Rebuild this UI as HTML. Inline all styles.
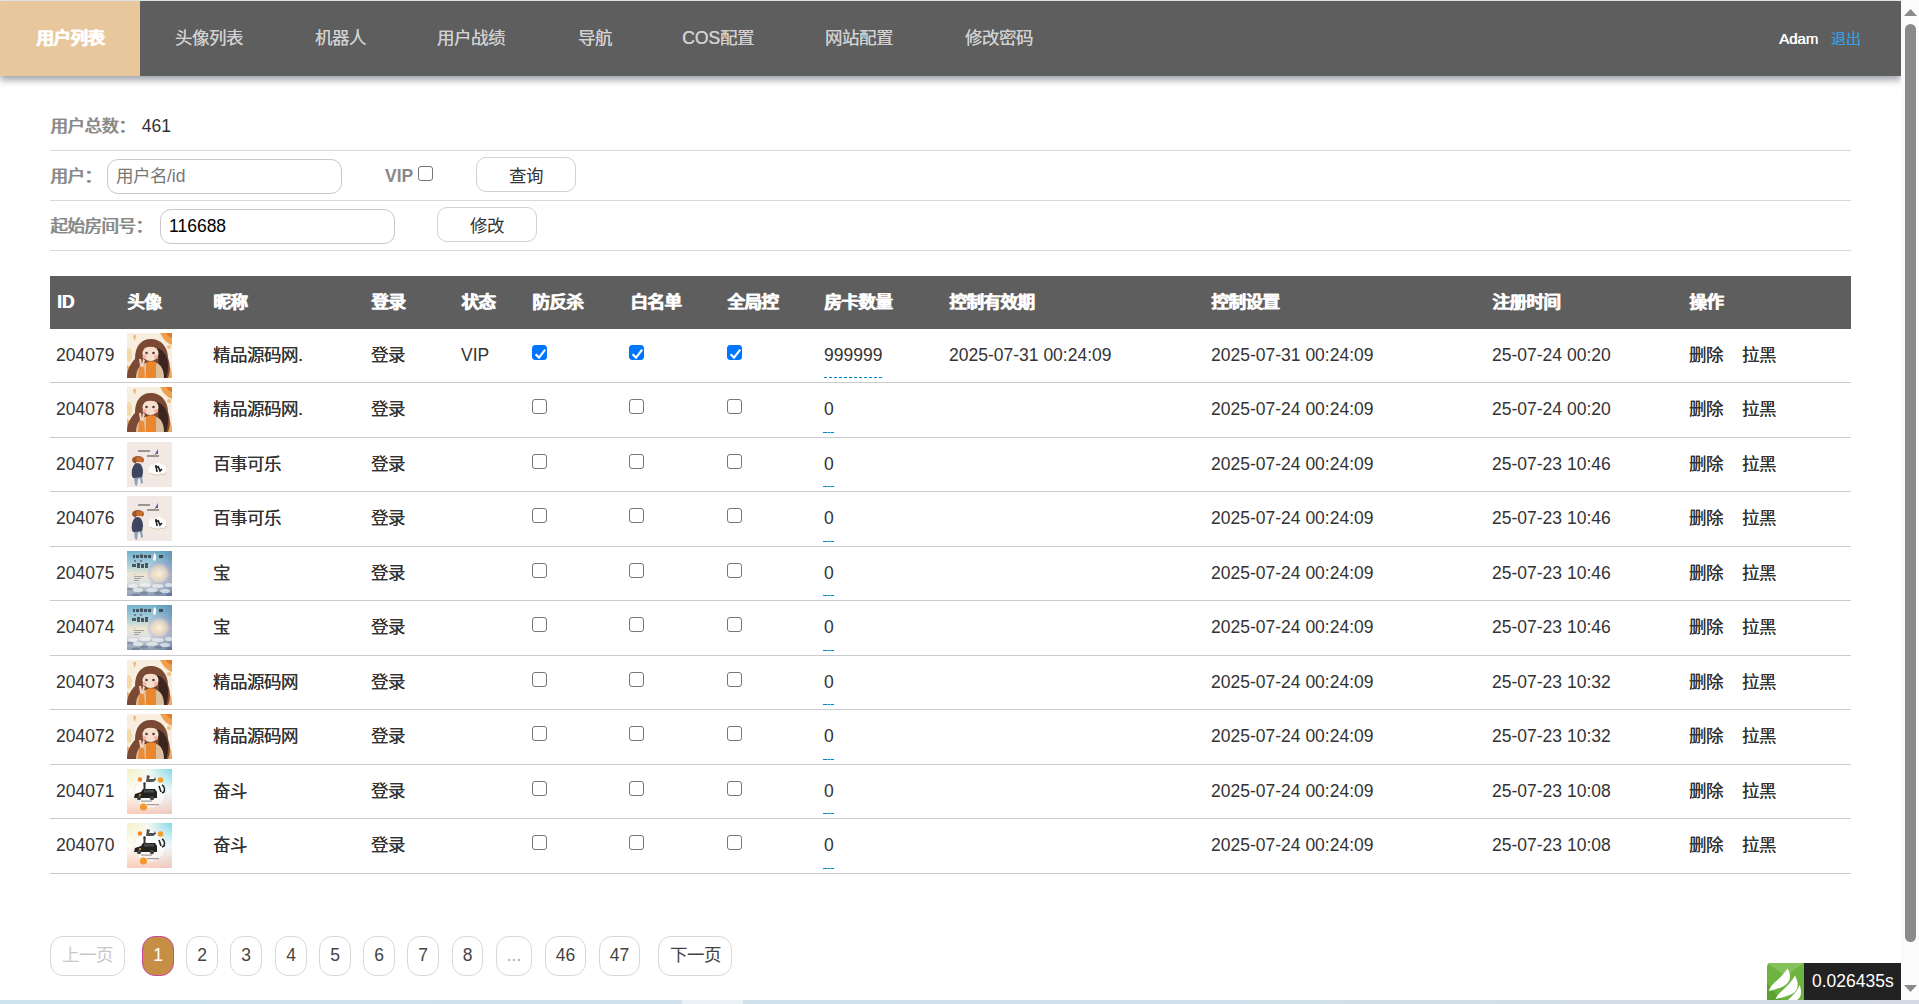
<!DOCTYPE html>
<html lang="zh-CN"><head><meta charset="utf-8"><style>
html,body{margin:0;padding:0;overflow:hidden;background:#fff;}
body{width:1919px;height:1004px;position:relative;font-family:"Liberation Sans",sans-serif;font-size:17.5px;color:#333;}
.a{position:absolute;white-space:nowrap;}
.topline{position:absolute;left:0;top:0;width:1902px;height:1px;background:#e9ecee;}
.nav{position:absolute;left:0;top:1px;width:1901px;height:75px;background:#5e5e5e;box-shadow:0 4px 7px rgba(60,70,85,.5);}
.nav a{position:absolute;top:0;height:75px;line-height:75px;color:#d0d0d0;text-decoration:none;white-space:nowrap;text-shadow:0.4px 0 0 #d0d0d0;}
.nav a.on{left:0;width:140px;background:#e8c79d;color:#fff;font-weight:bold;text-align:center;text-shadow:0.5px 0 0 #fff;}
.user{position:absolute;top:0;height:75px;line-height:75px;color:#fff;font-size:15px;text-shadow:0.4px 0 0 currentColor;}
.logout{color:#3a9bdc;}
.lbl{position:absolute;color:#888;font-weight:normal;white-space:nowrap;line-height:20px;text-shadow:0.5px 0 0 #888;}
.lbl b{font-weight:bold;text-shadow:none;}
.hr{position:absolute;left:50px;width:1801px;height:1px;background:#d9d9d9;}
.inp{position:absolute;box-sizing:border-box;border:1px solid #c8c8c8;border-radius:11px;height:35px;width:235px;line-height:33px;padding-left:8px;white-space:nowrap;}
.btn{position:absolute;box-sizing:border-box;border:1px solid #d0d0d0;border-radius:10px;height:35px;width:100px;line-height:36px;text-align:center;color:#333;}
.cb{position:absolute;box-sizing:border-box;width:15px;height:15px;border:1px solid #767676;border-radius:3px;background:#fff;}
.cb.on{background:#0075ff;border-color:#0075ff;}
.cb svg{position:absolute;left:0;top:0;}
.thead{position:absolute;left:50px;top:276px;width:1801px;height:53px;background:#5e5e5e;}
.th{position:absolute;top:0;line-height:53px;color:#fff;font-weight:bold;white-space:nowrap;text-shadow:0.5px 0 0 #fff;}
.rl{position:absolute;left:50px;width:1801px;height:1px;background:#cbcbcb;}
.td{position:absolute;white-space:nowrap;line-height:20px;}
.cj{text-shadow:0.3px 0 0 #333;}
.av{position:absolute;left:127px;width:45px;height:45px;overflow:hidden;}
.av svg{filter:blur(0.35px);}
.dash{position:absolute;height:1px;}
.pg{position:absolute;top:936px;height:40px;box-sizing:border-box;border:1px solid #d8d8d8;border-radius:13px;line-height:36px;text-align:center;color:#444;}
.sb{position:absolute;left:1901px;top:0;width:18px;height:1004px;background:#fbfbfb;}
</style></head><body>
<div class="topline"></div>
<div class="nav">
<a class="on">用户列表</a>
<a style="left:175px">头像列表</a>
<a style="left:315px">机器人</a>
<a style="left:437px">用户战绩</a>
<a style="left:578px">导航</a>
<a style="left:682px">COS配置</a>
<a style="left:825px">网站配置</a>
<a style="left:965px">修改密码</a>
<span class="user" style="left:1779px">Adam</span>
<span class="user logout" style="left:1831px">退出</span>
</div>

<div class="lbl" style="left:50px;top:116px">用户总数：<span style="color:#333;font-weight:normal;margin-left:2px;text-shadow:none"> 461</span></div>
<div class="hr" style="top:150px"></div>
<div class="lbl" style="left:50px;top:166px">用户：</div>
<div class="inp" style="left:107px;top:159px;color:#777">用户名/id</div>
<div class="lbl" style="left:385px;top:166px"><b>VIP</b></div>
<div class="cb" style="left:418px;top:166px"></div>
<div class="btn" style="left:476px;top:157px">查询</div>
<div class="hr" style="top:200px"></div>
<div class="lbl" style="left:50px;top:216px">起始房间号：</div>
<div class="inp" style="left:160px;top:209px;color:#000">116688</div>
<div class="btn" style="left:437px;top:207px">修改</div>
<div class="hr" style="top:250px"></div>
<div class="thead">
<span class="th" style="left:7px">ID</span>
<span class="th" style="left:77px">头像</span>
<span class="th" style="left:163px">昵称</span>
<span class="th" style="left:321px">登录</span>
<span class="th" style="left:411px">状态</span>
<span class="th" style="left:482px">防反杀</span>
<span class="th" style="left:580px">白名单</span>
<span class="th" style="left:677px">全局控</span>
<span class="th" style="left:774px">房卡数量</span>
<span class="th" style="left:899px">控制有效期</span>
<span class="th" style="left:1161px">控制设置</span>
<span class="th" style="left:1442px">注册时间</span>
<span class="th" style="left:1639px">操作</span>
</div>
<div class="av" style="top:333px"><svg width="45" height="45" viewBox="0 0 45 45">
<rect width="45" height="45" fill="#f7eee0"/>
<path d="M33 0 H45 V12 C42 11 38 8 36 5Z" fill="#eea04f"/>
<path d="M39 0 H45 V5 C42 4 40 2 39 0Z" fill="#e27a2a"/>
<path d="M6 3 L9 1.5 L8 8Z" fill="#efab68"/>
<circle cx="42" cy="14" r="2" fill="#f0c080"/>
<ellipse cx="2" cy="22" rx="3" ry="7" fill="#f3d9a8"/>
<path d="M0 32 C3 33 6 37 7 45 H0Z" fill="#eeb25c"/>
<path d="M39 30 C43 32 45 36 45 45 H38Z" fill="#eda55a"/>
<path d="M0 45 C0 36 4 30 8 26 C8 13 14 6 24 6 C34 6 41 14 41 25 C44 33 43 40 41 45Z" fill="#7a4a34"/>
<path d="M30 15 C37 17 42 25 41 34 C41 39 40 43 39 45 H30 C31 36 33 24 30 15Z" fill="#3c2420"/>
<ellipse cx="23.5" cy="20.5" rx="8" ry="7.5" fill="#f5dfcf"/>
<path d="M15 16 C17 11 22 10 28 11 C31 12 32 14 32 16 C27 13 20 13 15 16Z" fill="#7a4a34"/>
<circle cx="19.5" cy="20" r="1.3" fill="#5a3a38"/><circle cx="26.5" cy="20" r="1.3" fill="#5a3a38"/>
<circle cx="17.5" cy="24" r="2" fill="#f2b3a6"/><circle cx="29" cy="24" r="2" fill="#f2b3a6"/>
<path d="M9 45 C9 38 12 32 18 30 H29 C34 31 37 37 37 45Z" fill="#dcbf9c"/>
<path d="M19 45 V30 C21 28 25 28 29 29 V45Z" fill="#e9862e"/>
<path d="M11 45 L12 35 C13 33 16 33 17 35 L18 45Z" fill="#ea8c38"/>
<path d="M13 33 L12 26 L14 26 L15 31 L16 26 L18 27 L16 34Z" fill="#f3d5c0"/>
</svg></div>
<div class="td" style="left:56px;top:345px">204079</div>
<div class="td cj" style="left:213px;top:345px">精品源码网.</div>
<div class="td cj" style="left:371px;top:345px">登录</div>
<div class="td" style="left:461px;top:345px">VIP</div>
<div class="cb on" style="left:532px;top:345px"><svg width="15" height="15" viewBox="0 0 15 15"><path d="M2.6 8.2 L6 11.6 L12.2 3.6" fill="none" stroke="#fff" stroke-width="2.2"/></svg></div>
<div class="cb on" style="left:629px;top:345px"><svg width="15" height="15" viewBox="0 0 15 15"><path d="M2.6 8.2 L6 11.6 L12.2 3.6" fill="none" stroke="#fff" stroke-width="2.2"/></svg></div>
<div class="cb on" style="left:727px;top:345px"><svg width="15" height="15" viewBox="0 0 15 15"><path d="M2.6 8.2 L6 11.6 L12.2 3.6" fill="none" stroke="#fff" stroke-width="2.2"/></svg></div>
<div class="td" style="left:824px;top:345px">999999</div>
<div class="dash" style="left:824px;top:377px;width:58px;background:repeating-linear-gradient(90deg,#0085c9 0 3px,transparent 3px 5px)"></div>
<div class="td" style="left:949px;top:345px">2025-07-31 00:24:09</div>
<div class="td" style="left:1211px;top:345px">2025-07-31 00:24:09</div>
<div class="td" style="left:1492px;top:345px">25-07-24 00:20</div>
<div class="td cj" style="left:1689px;top:345px">删除</div>
<div class="td cj" style="left:1742px;top:345px">拉黑</div>
<div class="rl" style="top:382px"></div>
<div class="av" style="top:387px"><svg width="45" height="45" viewBox="0 0 45 45">
<rect width="45" height="45" fill="#f7eee0"/>
<path d="M33 0 H45 V12 C42 11 38 8 36 5Z" fill="#eea04f"/>
<path d="M39 0 H45 V5 C42 4 40 2 39 0Z" fill="#e27a2a"/>
<path d="M6 3 L9 1.5 L8 8Z" fill="#efab68"/>
<circle cx="42" cy="14" r="2" fill="#f0c080"/>
<ellipse cx="2" cy="22" rx="3" ry="7" fill="#f3d9a8"/>
<path d="M0 32 C3 33 6 37 7 45 H0Z" fill="#eeb25c"/>
<path d="M39 30 C43 32 45 36 45 45 H38Z" fill="#eda55a"/>
<path d="M0 45 C0 36 4 30 8 26 C8 13 14 6 24 6 C34 6 41 14 41 25 C44 33 43 40 41 45Z" fill="#7a4a34"/>
<path d="M30 15 C37 17 42 25 41 34 C41 39 40 43 39 45 H30 C31 36 33 24 30 15Z" fill="#3c2420"/>
<ellipse cx="23.5" cy="20.5" rx="8" ry="7.5" fill="#f5dfcf"/>
<path d="M15 16 C17 11 22 10 28 11 C31 12 32 14 32 16 C27 13 20 13 15 16Z" fill="#7a4a34"/>
<circle cx="19.5" cy="20" r="1.3" fill="#5a3a38"/><circle cx="26.5" cy="20" r="1.3" fill="#5a3a38"/>
<circle cx="17.5" cy="24" r="2" fill="#f2b3a6"/><circle cx="29" cy="24" r="2" fill="#f2b3a6"/>
<path d="M9 45 C9 38 12 32 18 30 H29 C34 31 37 37 37 45Z" fill="#dcbf9c"/>
<path d="M19 45 V30 C21 28 25 28 29 29 V45Z" fill="#e9862e"/>
<path d="M11 45 L12 35 C13 33 16 33 17 35 L18 45Z" fill="#ea8c38"/>
<path d="M13 33 L12 26 L14 26 L15 31 L16 26 L18 27 L16 34Z" fill="#f3d5c0"/>
</svg></div>
<div class="td" style="left:56px;top:399px">204078</div>
<div class="td cj" style="left:213px;top:399px">精品源码网.</div>
<div class="td cj" style="left:371px;top:399px">登录</div>
<div class="cb" style="left:532px;top:399px"></div>
<div class="cb" style="left:629px;top:399px"></div>
<div class="cb" style="left:727px;top:399px"></div>
<div class="td" style="left:824px;top:399px">0</div>
<div class="dash" style="left:823px;top:432px;width:11px;background:linear-gradient(90deg,#0085c9 0 4px,#8cc4e6 4px 5px,#0085c9 5px 7px,#8cc4e6 7px 8px,#0085c9 8px 11px)"></div>
<div class="td" style="left:1211px;top:399px">2025-07-24 00:24:09</div>
<div class="td" style="left:1492px;top:399px">25-07-24 00:20</div>
<div class="td cj" style="left:1689px;top:399px">删除</div>
<div class="td cj" style="left:1742px;top:399px">拉黑</div>
<div class="rl" style="top:437px"></div>
<div class="av" style="top:442px"><svg width="45" height="45" viewBox="0 0 45 45">
<rect width="45" height="45" fill="#f2e9e5"/>
<g fill="#9a9490"><rect x="11" y="8" width="12" height="2"/><rect x="20" y="13" width="12" height="2"/></g>
<path d="M28 12 L31 7 L31 12Z" fill="#4a62a8"/><path d="M27 13 L29 11 L29 14Z" fill="#c8a050"/>
<ellipse cx="11" cy="18" rx="6" ry="4" fill="#9a5530"/>
<path d="M9 16 C11 14 15 15 16 17 L15 20 L10 20Z" fill="#c8702e"/>
<rect x="9" y="20" width="6" height="4" fill="#e8d8d0"/>
<path d="M5 34 C4 28 6 22 10 21 C14 21 16 25 16 30 L15 36 L6 36Z" fill="#3d4560"/>
<path d="M7 36 L8 43 L10 44 L11 37 L13 36 L14 42 L16 41 L15 35Z" fill="#8fa0bb"/>
<path d="M22 27 C22 23 25 22 27 23 C29 20 34 20 35 23 C38 23 40 25 39 28 C40 31 37 33 34 32 C31 34 26 33 25 31 C22 32 21 29 22 27Z" fill="#fff"/>
<path d="M23 31 C26 33 31 34 34 32 C37 33 39 32 39 30" fill="none" stroke="#d9c8a0" stroke-width="1"/>
<path d="M29 23 L30 30 M28 25 L32 25 M31 24 L33 29 L35 27" stroke="#222" stroke-width="1.6" fill="none"/>
</svg></div>
<div class="td" style="left:56px;top:454px">204077</div>
<div class="td cj" style="left:213px;top:454px">百事可乐</div>
<div class="td cj" style="left:371px;top:454px">登录</div>
<div class="cb" style="left:532px;top:454px"></div>
<div class="cb" style="left:629px;top:454px"></div>
<div class="cb" style="left:727px;top:454px"></div>
<div class="td" style="left:824px;top:454px">0</div>
<div class="dash" style="left:823px;top:486px;width:11px;background:linear-gradient(90deg,#0085c9 0 4px,#8cc4e6 4px 5px,#0085c9 5px 7px,#8cc4e6 7px 8px,#0085c9 8px 11px)"></div>
<div class="td" style="left:1211px;top:454px">2025-07-24 00:24:09</div>
<div class="td" style="left:1492px;top:454px">25-07-23 10:46</div>
<div class="td cj" style="left:1689px;top:454px">删除</div>
<div class="td cj" style="left:1742px;top:454px">拉黑</div>
<div class="rl" style="top:491px"></div>
<div class="av" style="top:496px"><svg width="45" height="45" viewBox="0 0 45 45">
<rect width="45" height="45" fill="#f2e9e5"/>
<g fill="#9a9490"><rect x="11" y="8" width="12" height="2"/><rect x="20" y="13" width="12" height="2"/></g>
<path d="M28 12 L31 7 L31 12Z" fill="#4a62a8"/><path d="M27 13 L29 11 L29 14Z" fill="#c8a050"/>
<ellipse cx="11" cy="18" rx="6" ry="4" fill="#9a5530"/>
<path d="M9 16 C11 14 15 15 16 17 L15 20 L10 20Z" fill="#c8702e"/>
<rect x="9" y="20" width="6" height="4" fill="#e8d8d0"/>
<path d="M5 34 C4 28 6 22 10 21 C14 21 16 25 16 30 L15 36 L6 36Z" fill="#3d4560"/>
<path d="M7 36 L8 43 L10 44 L11 37 L13 36 L14 42 L16 41 L15 35Z" fill="#8fa0bb"/>
<path d="M22 27 C22 23 25 22 27 23 C29 20 34 20 35 23 C38 23 40 25 39 28 C40 31 37 33 34 32 C31 34 26 33 25 31 C22 32 21 29 22 27Z" fill="#fff"/>
<path d="M23 31 C26 33 31 34 34 32 C37 33 39 32 39 30" fill="none" stroke="#d9c8a0" stroke-width="1"/>
<path d="M29 23 L30 30 M28 25 L32 25 M31 24 L33 29 L35 27" stroke="#222" stroke-width="1.6" fill="none"/>
</svg></div>
<div class="td" style="left:56px;top:508px">204076</div>
<div class="td cj" style="left:213px;top:508px">百事可乐</div>
<div class="td cj" style="left:371px;top:508px">登录</div>
<div class="cb" style="left:532px;top:508px"></div>
<div class="cb" style="left:629px;top:508px"></div>
<div class="cb" style="left:727px;top:508px"></div>
<div class="td" style="left:824px;top:508px">0</div>
<div class="dash" style="left:823px;top:541px;width:11px;background:linear-gradient(90deg,#0085c9 0 4px,#8cc4e6 4px 5px,#0085c9 5px 7px,#8cc4e6 7px 8px,#0085c9 8px 11px)"></div>
<div class="td" style="left:1211px;top:508px">2025-07-24 00:24:09</div>
<div class="td" style="left:1492px;top:508px">25-07-23 10:46</div>
<div class="td cj" style="left:1689px;top:508px">删除</div>
<div class="td cj" style="left:1742px;top:508px">拉黑</div>
<div class="rl" style="top:546px"></div>
<div class="av" style="top:551px"><svg width="45" height="45" viewBox="0 0 45 45">
<defs><linearGradient id="gs" x1="0" y1="0" x2="0" y2="1"><stop offset="0" stop-color="#74b2cb"/><stop offset=".3" stop-color="#a9cfdc"/><stop offset=".52" stop-color="#ece6d2"/><stop offset=".68" stop-color="#dfe2de"/><stop offset="1" stop-color="#8c9ab2"/></linearGradient>
<radialGradient id="gr" cx=".72" cy=".5" r=".28"><stop offset="0" stop-color="#fbf3d8" stop-opacity=".95"/><stop offset=".6" stop-color="#f4d8c0" stop-opacity=".6"/><stop offset=".85" stop-color="#b0a8d8" stop-opacity=".35"/><stop offset="1" stop-color="#9090c0" stop-opacity="0"/></radialGradient>
<linearGradient id="gsr" x1="0" y1="0" x2="1" y2="0"><stop offset=".5" stop-color="#4e7fa8" stop-opacity="0"/><stop offset="1" stop-color="#3e5f98" stop-opacity=".4"/></linearGradient></defs>
<rect width="45" height="45" fill="url(#gs)"/>
<rect width="45" height="45" fill="url(#gsr)"/>
<rect width="45" height="45" fill="url(#gr)"/>
<g fill="#2a3038" opacity=".75"><rect x="6" y="4" width="2" height="3"/><rect x="9" y="4" width="3" height="3"/><rect x="13" y="3.5" width="3" height="3.5"/><rect x="17" y="4" width="3" height="3"/><rect x="21" y="4" width="3" height="3"/><rect x="32" y="4" width="4" height="3"/><rect x="7" y="9" width="2" height="2" opacity=".6"/><rect x="13" y="9" width="2" height="2" opacity=".6"/><rect x="5" y="13" width="4" height="3"/><rect x="10" y="12" width="3" height="5"/><rect x="14" y="13" width="3" height="4"/><rect x="18" y="12" width="3" height="5"/></g>
<path d="M27 2 C29 3 30 6 28 10 L26 9Z" fill="#fff"/>
<g fill="#556" opacity=".45"><rect x="7" y="23" width="1" height="1"/><rect x="7" y="25" width="10" height="1"/><rect x="7" y="27" width="7" height="1"/><rect x="7" y="29" width="5" height="1"/></g>
<g fill="#fff" opacity=".6"><ellipse cx="6" cy="35" rx="5" ry="2"/><ellipse cx="18" cy="34" rx="6" ry="2"/><ellipse cx="31" cy="35" rx="6" ry="2"/><ellipse cx="42" cy="34" rx="4" ry="2"/><ellipse cx="11" cy="39" rx="5" ry="2"/><ellipse cx="25" cy="39" rx="6" ry="2"/><ellipse cx="38" cy="40" rx="5" ry="2"/></g>
<g fill="#4a5a7a" opacity=".4"><ellipse cx="3" cy="38" rx="3" ry="1.5"/><ellipse cx="17" cy="42" rx="4" ry="1.5"/><ellipse cx="31" cy="42" rx="4" ry="1.5"/><ellipse cx="43" cy="44" rx="4" ry="2"/><ellipse cx="9" cy="44" rx="4" ry="1.5"/></g>
</svg></div>
<div class="td" style="left:56px;top:563px">204075</div>
<div class="td cj" style="left:213px;top:563px">宝</div>
<div class="td cj" style="left:371px;top:563px">登录</div>
<div class="cb" style="left:532px;top:563px"></div>
<div class="cb" style="left:629px;top:563px"></div>
<div class="cb" style="left:727px;top:563px"></div>
<div class="td" style="left:824px;top:563px">0</div>
<div class="dash" style="left:823px;top:595px;width:11px;background:linear-gradient(90deg,#0085c9 0 4px,#8cc4e6 4px 5px,#0085c9 5px 7px,#8cc4e6 7px 8px,#0085c9 8px 11px)"></div>
<div class="td" style="left:1211px;top:563px">2025-07-24 00:24:09</div>
<div class="td" style="left:1492px;top:563px">25-07-23 10:46</div>
<div class="td cj" style="left:1689px;top:563px">删除</div>
<div class="td cj" style="left:1742px;top:563px">拉黑</div>
<div class="rl" style="top:600px"></div>
<div class="av" style="top:605px"><svg width="45" height="45" viewBox="0 0 45 45">
<defs><linearGradient id="gs" x1="0" y1="0" x2="0" y2="1"><stop offset="0" stop-color="#74b2cb"/><stop offset=".3" stop-color="#a9cfdc"/><stop offset=".52" stop-color="#ece6d2"/><stop offset=".68" stop-color="#dfe2de"/><stop offset="1" stop-color="#8c9ab2"/></linearGradient>
<radialGradient id="gr" cx=".72" cy=".5" r=".28"><stop offset="0" stop-color="#fbf3d8" stop-opacity=".95"/><stop offset=".6" stop-color="#f4d8c0" stop-opacity=".6"/><stop offset=".85" stop-color="#b0a8d8" stop-opacity=".35"/><stop offset="1" stop-color="#9090c0" stop-opacity="0"/></radialGradient>
<linearGradient id="gsr" x1="0" y1="0" x2="1" y2="0"><stop offset=".5" stop-color="#4e7fa8" stop-opacity="0"/><stop offset="1" stop-color="#3e5f98" stop-opacity=".4"/></linearGradient></defs>
<rect width="45" height="45" fill="url(#gs)"/>
<rect width="45" height="45" fill="url(#gsr)"/>
<rect width="45" height="45" fill="url(#gr)"/>
<g fill="#2a3038" opacity=".75"><rect x="6" y="4" width="2" height="3"/><rect x="9" y="4" width="3" height="3"/><rect x="13" y="3.5" width="3" height="3.5"/><rect x="17" y="4" width="3" height="3"/><rect x="21" y="4" width="3" height="3"/><rect x="32" y="4" width="4" height="3"/><rect x="7" y="9" width="2" height="2" opacity=".6"/><rect x="13" y="9" width="2" height="2" opacity=".6"/><rect x="5" y="13" width="4" height="3"/><rect x="10" y="12" width="3" height="5"/><rect x="14" y="13" width="3" height="4"/><rect x="18" y="12" width="3" height="5"/></g>
<path d="M27 2 C29 3 30 6 28 10 L26 9Z" fill="#fff"/>
<g fill="#556" opacity=".45"><rect x="7" y="23" width="1" height="1"/><rect x="7" y="25" width="10" height="1"/><rect x="7" y="27" width="7" height="1"/><rect x="7" y="29" width="5" height="1"/></g>
<g fill="#fff" opacity=".6"><ellipse cx="6" cy="35" rx="5" ry="2"/><ellipse cx="18" cy="34" rx="6" ry="2"/><ellipse cx="31" cy="35" rx="6" ry="2"/><ellipse cx="42" cy="34" rx="4" ry="2"/><ellipse cx="11" cy="39" rx="5" ry="2"/><ellipse cx="25" cy="39" rx="6" ry="2"/><ellipse cx="38" cy="40" rx="5" ry="2"/></g>
<g fill="#4a5a7a" opacity=".4"><ellipse cx="3" cy="38" rx="3" ry="1.5"/><ellipse cx="17" cy="42" rx="4" ry="1.5"/><ellipse cx="31" cy="42" rx="4" ry="1.5"/><ellipse cx="43" cy="44" rx="4" ry="2"/><ellipse cx="9" cy="44" rx="4" ry="1.5"/></g>
</svg></div>
<div class="td" style="left:56px;top:617px">204074</div>
<div class="td cj" style="left:213px;top:617px">宝</div>
<div class="td cj" style="left:371px;top:617px">登录</div>
<div class="cb" style="left:532px;top:617px"></div>
<div class="cb" style="left:629px;top:617px"></div>
<div class="cb" style="left:727px;top:617px"></div>
<div class="td" style="left:824px;top:617px">0</div>
<div class="dash" style="left:823px;top:650px;width:11px;background:linear-gradient(90deg,#0085c9 0 4px,#8cc4e6 4px 5px,#0085c9 5px 7px,#8cc4e6 7px 8px,#0085c9 8px 11px)"></div>
<div class="td" style="left:1211px;top:617px">2025-07-24 00:24:09</div>
<div class="td" style="left:1492px;top:617px">25-07-23 10:46</div>
<div class="td cj" style="left:1689px;top:617px">删除</div>
<div class="td cj" style="left:1742px;top:617px">拉黑</div>
<div class="rl" style="top:655px"></div>
<div class="av" style="top:660px"><svg width="45" height="45" viewBox="0 0 45 45">
<rect width="45" height="45" fill="#f7eee0"/>
<path d="M33 0 H45 V12 C42 11 38 8 36 5Z" fill="#eea04f"/>
<path d="M39 0 H45 V5 C42 4 40 2 39 0Z" fill="#e27a2a"/>
<path d="M6 3 L9 1.5 L8 8Z" fill="#efab68"/>
<circle cx="42" cy="14" r="2" fill="#f0c080"/>
<ellipse cx="2" cy="22" rx="3" ry="7" fill="#f3d9a8"/>
<path d="M0 32 C3 33 6 37 7 45 H0Z" fill="#eeb25c"/>
<path d="M39 30 C43 32 45 36 45 45 H38Z" fill="#eda55a"/>
<path d="M0 45 C0 36 4 30 8 26 C8 13 14 6 24 6 C34 6 41 14 41 25 C44 33 43 40 41 45Z" fill="#7a4a34"/>
<path d="M30 15 C37 17 42 25 41 34 C41 39 40 43 39 45 H30 C31 36 33 24 30 15Z" fill="#3c2420"/>
<ellipse cx="23.5" cy="20.5" rx="8" ry="7.5" fill="#f5dfcf"/>
<path d="M15 16 C17 11 22 10 28 11 C31 12 32 14 32 16 C27 13 20 13 15 16Z" fill="#7a4a34"/>
<circle cx="19.5" cy="20" r="1.3" fill="#5a3a38"/><circle cx="26.5" cy="20" r="1.3" fill="#5a3a38"/>
<circle cx="17.5" cy="24" r="2" fill="#f2b3a6"/><circle cx="29" cy="24" r="2" fill="#f2b3a6"/>
<path d="M9 45 C9 38 12 32 18 30 H29 C34 31 37 37 37 45Z" fill="#dcbf9c"/>
<path d="M19 45 V30 C21 28 25 28 29 29 V45Z" fill="#e9862e"/>
<path d="M11 45 L12 35 C13 33 16 33 17 35 L18 45Z" fill="#ea8c38"/>
<path d="M13 33 L12 26 L14 26 L15 31 L16 26 L18 27 L16 34Z" fill="#f3d5c0"/>
</svg></div>
<div class="td" style="left:56px;top:672px">204073</div>
<div class="td cj" style="left:213px;top:672px">精品源码网</div>
<div class="td cj" style="left:371px;top:672px">登录</div>
<div class="cb" style="left:532px;top:672px"></div>
<div class="cb" style="left:629px;top:672px"></div>
<div class="cb" style="left:727px;top:672px"></div>
<div class="td" style="left:824px;top:672px">0</div>
<div class="dash" style="left:823px;top:704px;width:11px;background:linear-gradient(90deg,#0085c9 0 4px,#8cc4e6 4px 5px,#0085c9 5px 7px,#8cc4e6 7px 8px,#0085c9 8px 11px)"></div>
<div class="td" style="left:1211px;top:672px">2025-07-24 00:24:09</div>
<div class="td" style="left:1492px;top:672px">25-07-23 10:32</div>
<div class="td cj" style="left:1689px;top:672px">删除</div>
<div class="td cj" style="left:1742px;top:672px">拉黑</div>
<div class="rl" style="top:709px"></div>
<div class="av" style="top:714px"><svg width="45" height="45" viewBox="0 0 45 45">
<rect width="45" height="45" fill="#f7eee0"/>
<path d="M33 0 H45 V12 C42 11 38 8 36 5Z" fill="#eea04f"/>
<path d="M39 0 H45 V5 C42 4 40 2 39 0Z" fill="#e27a2a"/>
<path d="M6 3 L9 1.5 L8 8Z" fill="#efab68"/>
<circle cx="42" cy="14" r="2" fill="#f0c080"/>
<ellipse cx="2" cy="22" rx="3" ry="7" fill="#f3d9a8"/>
<path d="M0 32 C3 33 6 37 7 45 H0Z" fill="#eeb25c"/>
<path d="M39 30 C43 32 45 36 45 45 H38Z" fill="#eda55a"/>
<path d="M0 45 C0 36 4 30 8 26 C8 13 14 6 24 6 C34 6 41 14 41 25 C44 33 43 40 41 45Z" fill="#7a4a34"/>
<path d="M30 15 C37 17 42 25 41 34 C41 39 40 43 39 45 H30 C31 36 33 24 30 15Z" fill="#3c2420"/>
<ellipse cx="23.5" cy="20.5" rx="8" ry="7.5" fill="#f5dfcf"/>
<path d="M15 16 C17 11 22 10 28 11 C31 12 32 14 32 16 C27 13 20 13 15 16Z" fill="#7a4a34"/>
<circle cx="19.5" cy="20" r="1.3" fill="#5a3a38"/><circle cx="26.5" cy="20" r="1.3" fill="#5a3a38"/>
<circle cx="17.5" cy="24" r="2" fill="#f2b3a6"/><circle cx="29" cy="24" r="2" fill="#f2b3a6"/>
<path d="M9 45 C9 38 12 32 18 30 H29 C34 31 37 37 37 45Z" fill="#dcbf9c"/>
<path d="M19 45 V30 C21 28 25 28 29 29 V45Z" fill="#e9862e"/>
<path d="M11 45 L12 35 C13 33 16 33 17 35 L18 45Z" fill="#ea8c38"/>
<path d="M13 33 L12 26 L14 26 L15 31 L16 26 L18 27 L16 34Z" fill="#f3d5c0"/>
</svg></div>
<div class="td" style="left:56px;top:726px">204072</div>
<div class="td cj" style="left:213px;top:726px">精品源码网</div>
<div class="td cj" style="left:371px;top:726px">登录</div>
<div class="cb" style="left:532px;top:726px"></div>
<div class="cb" style="left:629px;top:726px"></div>
<div class="cb" style="left:727px;top:726px"></div>
<div class="td" style="left:824px;top:726px">0</div>
<div class="dash" style="left:823px;top:759px;width:11px;background:linear-gradient(90deg,#0085c9 0 4px,#8cc4e6 4px 5px,#0085c9 5px 7px,#8cc4e6 7px 8px,#0085c9 8px 11px)"></div>
<div class="td" style="left:1211px;top:726px">2025-07-24 00:24:09</div>
<div class="td" style="left:1492px;top:726px">25-07-23 10:32</div>
<div class="td cj" style="left:1689px;top:726px">删除</div>
<div class="td cj" style="left:1742px;top:726px">拉黑</div>
<div class="rl" style="top:764px"></div>
<div class="av" style="top:769px"><svg width="45" height="45" viewBox="0 0 45 45">
<defs><linearGradient id="gc1" x1="0" y1="0" x2="1" y2="0"><stop offset="0" stop-color="#f3f0c0"/><stop offset=".45" stop-color="#f7f8f0"/><stop offset="1" stop-color="#7fd6e8"/></linearGradient>
<linearGradient id="gc2" x1="0" y1="0" x2="0" y2="1"><stop offset="0" stop-color="#fff" stop-opacity="0"/><stop offset=".5" stop-color="#fff" stop-opacity=".85"/><stop offset="1" stop-color="#f8c8b8" stop-opacity=".9"/></linearGradient></defs>
<rect width="45" height="45" fill="url(#gc1)"/>
<rect width="45" height="45" fill="url(#gc2)"/>
<circle cx="23" cy="23" r="16" fill="#fff" opacity=".55"/>
<circle cx="23" cy="23" r="16" fill="none" stroke="#e8d8d0" stroke-width=".5"/>
<circle cx="13" cy="10.5" r="2.2" fill="#f08424"/>
<circle cx="33.5" cy="11" r="2.8" fill="#f2a02a"/>
<path d="M20 6 L23 7 L22 10 L27 10 L28 8 L29 11 L26 13 L19 13Z" fill="#333" opacity=".85"/>
<path d="M7 29 L8 25 L14 23 L16 20 L28 20 L30 23 L30 29Z" fill="#222"/>
<rect x="17" y="21" width="10" height="2.5" fill="#4a4a4a"/>
<rect x="16.5" y="15" width="2" height="6" fill="#333"/>
<circle cx="17.5" cy="14.5" r="1.2" fill="#333"/>
<circle cx="12" cy="29" r="2.2" fill="#444"/><circle cx="25" cy="29" r="2.2" fill="#444"/>
<path d="M32 17 L34 23 M35 16 C37 17 38 20 37 23 L35 24" stroke="#222" stroke-width="1.6" fill="none"/>
<g fill="#777" opacity=".7"><rect x="14" y="31.5" width="11" height="1.2"/><rect x="20" y="35" width="12" height="1.2"/></g>
<circle cx="16.5" cy="38" r="3.6" fill="#f09a2e"/>
<circle cx="13" cy="26" r="1" fill="#f0a040"/>
</svg></div>
<div class="td" style="left:56px;top:781px">204071</div>
<div class="td cj" style="left:213px;top:781px">奋斗</div>
<div class="td cj" style="left:371px;top:781px">登录</div>
<div class="cb" style="left:532px;top:781px"></div>
<div class="cb" style="left:629px;top:781px"></div>
<div class="cb" style="left:727px;top:781px"></div>
<div class="td" style="left:824px;top:781px">0</div>
<div class="dash" style="left:823px;top:813px;width:11px;background:linear-gradient(90deg,#0085c9 0 4px,#8cc4e6 4px 5px,#0085c9 5px 7px,#8cc4e6 7px 8px,#0085c9 8px 11px)"></div>
<div class="td" style="left:1211px;top:781px">2025-07-24 00:24:09</div>
<div class="td" style="left:1492px;top:781px">25-07-23 10:08</div>
<div class="td cj" style="left:1689px;top:781px">删除</div>
<div class="td cj" style="left:1742px;top:781px">拉黑</div>
<div class="rl" style="top:818px"></div>
<div class="av" style="top:823px"><svg width="45" height="45" viewBox="0 0 45 45">
<defs><linearGradient id="gc1" x1="0" y1="0" x2="1" y2="0"><stop offset="0" stop-color="#f3f0c0"/><stop offset=".45" stop-color="#f7f8f0"/><stop offset="1" stop-color="#7fd6e8"/></linearGradient>
<linearGradient id="gc2" x1="0" y1="0" x2="0" y2="1"><stop offset="0" stop-color="#fff" stop-opacity="0"/><stop offset=".5" stop-color="#fff" stop-opacity=".85"/><stop offset="1" stop-color="#f8c8b8" stop-opacity=".9"/></linearGradient></defs>
<rect width="45" height="45" fill="url(#gc1)"/>
<rect width="45" height="45" fill="url(#gc2)"/>
<circle cx="23" cy="23" r="16" fill="#fff" opacity=".55"/>
<circle cx="23" cy="23" r="16" fill="none" stroke="#e8d8d0" stroke-width=".5"/>
<circle cx="13" cy="10.5" r="2.2" fill="#f08424"/>
<circle cx="33.5" cy="11" r="2.8" fill="#f2a02a"/>
<path d="M20 6 L23 7 L22 10 L27 10 L28 8 L29 11 L26 13 L19 13Z" fill="#333" opacity=".85"/>
<path d="M7 29 L8 25 L14 23 L16 20 L28 20 L30 23 L30 29Z" fill="#222"/>
<rect x="17" y="21" width="10" height="2.5" fill="#4a4a4a"/>
<rect x="16.5" y="15" width="2" height="6" fill="#333"/>
<circle cx="17.5" cy="14.5" r="1.2" fill="#333"/>
<circle cx="12" cy="29" r="2.2" fill="#444"/><circle cx="25" cy="29" r="2.2" fill="#444"/>
<path d="M32 17 L34 23 M35 16 C37 17 38 20 37 23 L35 24" stroke="#222" stroke-width="1.6" fill="none"/>
<g fill="#777" opacity=".7"><rect x="14" y="31.5" width="11" height="1.2"/><rect x="20" y="35" width="12" height="1.2"/></g>
<circle cx="16.5" cy="38" r="3.6" fill="#f09a2e"/>
<circle cx="13" cy="26" r="1" fill="#f0a040"/>
</svg></div>
<div class="td" style="left:56px;top:835px">204070</div>
<div class="td cj" style="left:213px;top:835px">奋斗</div>
<div class="td cj" style="left:371px;top:835px">登录</div>
<div class="cb" style="left:532px;top:835px"></div>
<div class="cb" style="left:629px;top:835px"></div>
<div class="cb" style="left:727px;top:835px"></div>
<div class="td" style="left:824px;top:835px">0</div>
<div class="dash" style="left:823px;top:868px;width:11px;background:linear-gradient(90deg,#0085c9 0 4px,#8cc4e6 4px 5px,#0085c9 5px 7px,#8cc4e6 7px 8px,#0085c9 8px 11px)"></div>
<div class="td" style="left:1211px;top:835px">2025-07-24 00:24:09</div>
<div class="td" style="left:1492px;top:835px">25-07-23 10:08</div>
<div class="td cj" style="left:1689px;top:835px">删除</div>
<div class="td cj" style="left:1742px;top:835px">拉黑</div>
<div class="rl" style="top:873px"></div>
<div class="pg" style="left:50px;width:75px;color:#c8c8c8">上一页</div>
<div class="pg" style="left:142px;width:32px;background:#c68f45;border-color:#c84aa0;color:#fff">1</div>
<div class="pg" style="left:186px;width:32px;">2</div>
<div class="pg" style="left:230px;width:32px;">3</div>
<div class="pg" style="left:275px;width:32px;">4</div>
<div class="pg" style="left:319px;width:32px;">5</div>
<div class="pg" style="left:363px;width:32px;">6</div>
<div class="pg" style="left:407px;width:32px;">7</div>
<div class="pg" style="left:452px;width:31px;">8</div>
<div class="pg" style="left:496px;width:36px;color:#aab">...</div>
<div class="pg" style="left:545px;width:41px;">46</div>
<div class="pg" style="left:599px;width:41px;">47</div>
<div class="pg" style="left:658px;width:74px;">下一页</div>

<div class="a" style="left:1767px;top:963px;width:37px;height:37px;background:#6db33f;border-top-left-radius:4px;overflow:hidden">
<svg width="37" height="37" viewBox="0 0 37 37"><path d="M0 0 L37 0 L18.5 13 Z" fill="#86c25c"/><path d="M0 37 L0 20 L14 37Z" fill="#5da032"/><path d="M2 28 C3 21 13 17 20.5 5.5 C24.5 12 24 19 17 23 C11 26 6 27 2 28Z" fill="#fff"/><path d="M8.5 36 C11 29 21 25 28 12.5 C32 20 32 27 25 31 C19 34 13 35 8.5 36Z" fill="#fff"/><path d="M21 37 C25 33 30 29 32.5 22 C35.5 29 34 35 30 37Z" fill="#fff"/></svg></div>
<div class="a" style="left:1804px;top:963px;width:97px;height:37px;background:#222;color:#fff;line-height:37px;text-indent:8px">0.026435s</div>
<div class="sb">
<svg width="18" height="1004" style="position:absolute;left:0;top:0"><path d="M3 16 L9.5 9 L16 16Z" fill="#8a8a8a"/><rect x="4" y="24" width="11" height="918" rx="5.5" fill="#8a8a8a"/><path d="M3 985 L9.5 992 L16 985Z" fill="#8a8a8a"/></svg>
</div>
<div class="a" style="left:0;top:1000px;width:1919px;height:4px;background:linear-gradient(90deg,#cde4ee,#d0e0ea 60%,#d4dbe6)"></div>
<div class="a" style="left:682px;top:1000px;width:61px;height:4px;background:#eaf2f6"></div>

</body></html>
